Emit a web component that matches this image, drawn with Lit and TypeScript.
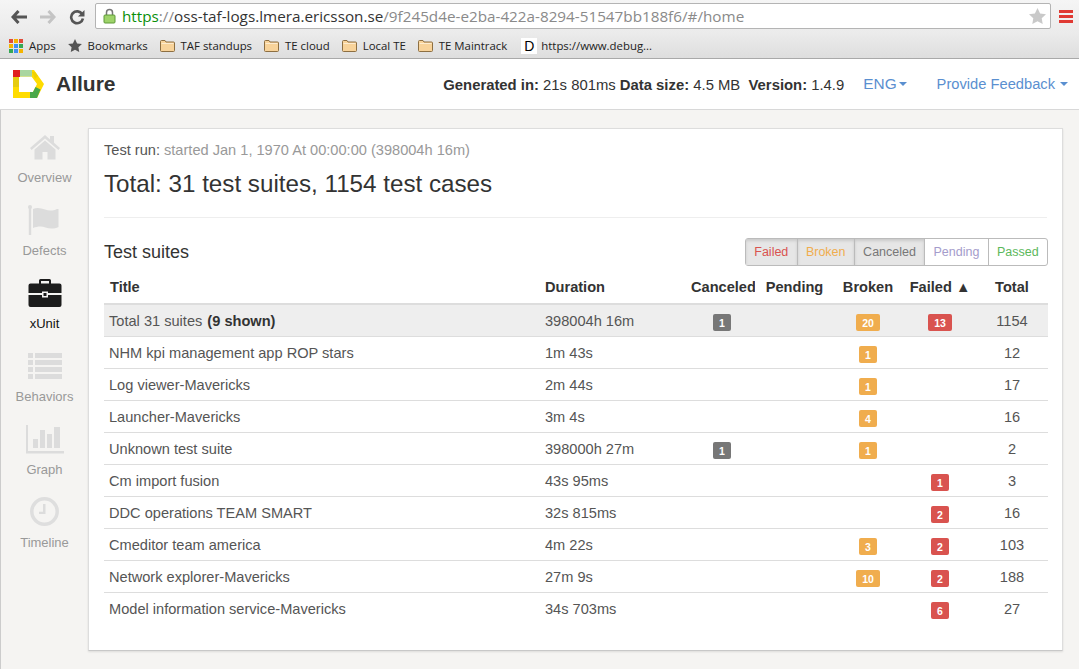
import { LitElement, html, css, svg } from 'lit';
import { customElement } from 'lit/decorators.js';

type Row = {
  title: string;
  bold?: string;
  duration: string;
  canceled?: number;
  broken?: number;
  failed?: number;
  total: number;
};

const ROWS: Row[] = [
  { title: 'Total 31 suites ', bold: '(9 shown)', duration: '398004h 16m', canceled: 1, broken: 20, failed: 13, total: 1154 },
  { title: 'NHM kpi management app ROP stars', duration: '1m 43s', broken: 1, total: 12 },
  { title: 'Log viewer-Mavericks', duration: '2m 44s', broken: 1, total: 17 },
  { title: 'Launcher-Mavericks', duration: '3m 4s', broken: 4, total: 16 },
  { title: 'Unknown test suite', duration: '398000h 27m', canceled: 1, broken: 1, total: 2 },
  { title: 'Cm import fusion', duration: '43s 95ms', failed: 1, total: 3 },
  { title: 'DDC operations TEAM SMART', duration: '32s 815ms', failed: 2, total: 16 },
  { title: 'Cmeditor team america', duration: '4m 22s', broken: 3, failed: 2, total: 103 },
  { title: 'Network explorer-Mavericks', duration: '27m 9s', broken: 10, failed: 2, total: 188 },
  { title: 'Model information service-Mavericks', duration: '34s 703ms', failed: 6, total: 27 },
];

const FOLDER = svg`<svg class="folder" width="15" height="14" viewBox="0 0 15 14">
  <path d="M.5 2.500q0-1 1-1h3.500l1 1.500h7.500q1 0 1 1v7.500q0 1-1 1h-12q-1 0-1-1z" fill="#f8d39a" stroke="#8d6f42"/>
  <path d="M1.500 4.500h12" stroke="#fdeccf"/>
</svg>`;

const NAV = [
  {
    label: 'Overview',
    icon: svg`<svg width="30" height="26" viewBox="0 0 30 26"><path d="M15 1 0 14l1.600 1.900L15 4.400l13.400 11.500L30 14l-6-5.200V2h-4v3.400z"/><path d="M15 6.500 4.500 15.500V25.500h8V18h5v7.500h8v-10z"/></svg>`,
  },
  {
    label: 'Defects',
    icon: svg`<svg width="34" height="32" viewBox="0 0 34 32"><circle cx="2" cy="3" r="2"/><rect x=".8" y="3" width="2.400" height="28"/><path d="M5 5c4-2 8-1 12 .5s8 1.500 12-.5h1.500v18c-4 2-9 2-13 .5s-8-1-12.500.5z"/></svg>`,
  },
  {
    label: 'xUnit',
    active: true,
    icon: svg`<svg width="34" height="30" viewBox="0 0 34 30"><path d="M11 6V2.500Q11 1 12.500 1h9Q23 1 23 2.500V6h-2V3h-8v3z"/><path d="M2.500 5.500h29Q33.500 5.500 33.500 7.500V15H20v-1.500h-6V15H.5V7.500Q.5 5.500 2.500 5.500z"/><path d="M.5 17H14v2.500h6V17h13.500v10q0 2-2 2h-29q-2 0-2-2z"/><rect x="15.500" y="15" width="3" height="3"/></svg>`,
  },
  {
    label: 'Behaviors',
    icon: svg`<svg width="34" height="27" viewBox="0 0 34 27"><rect width="5" height="5"/><rect x="7" width="27" height="5"/><rect y="7" width="5" height="5"/><rect x="7" y="7" width="27" height="5"/><rect y="14" width="5" height="5"/><rect x="7" y="14" width="27" height="5"/><rect y="21" width="5" height="5"/><rect x="7" y="21" width="27" height="5"/></svg>`,
  },
  {
    label: 'Graph',
    icon: svg`<svg width="38" height="29" viewBox="0 0 38 29"><path d="M0 0h2v26h36v2.500H0z"/><rect x="7" y="14" width="5" height="9"/><rect x="14" y="5" width="5" height="18"/><rect x="21" y="9" width="5" height="14"/><rect x="28" y="2" width="6" height="21"/></svg>`,
  },
  {
    label: 'Timeline',
    icon: svg`<svg width="30" height="30" viewBox="0 0 30 30"><circle cx="14.500" cy="14.500" r="12.700" fill="none" stroke="currentColor" stroke-width="3.500"/><path d="M13 7h2.500v10H9v-2.200h4z"/></svg>`,
  },
];

@customElement('app-root')
export class AppRoot extends LitElement {
  static styles = css`
    :host {
      display: block;
      height: 669px;
      overflow: hidden;
      background: #f5f4f2;
      font-family: 'Liberation Sans', Arial, sans-serif;
      font-size: 14.600px;
      color: #333;
    }
    .toolbar {
      height: 33px;
      display: flex;
      align-items: center;
      padding: 0 6px 0 11px;
      background: linear-gradient(#f5f5f5, #ebebeb);
      box-sizing: border-box;
    }
    .nav-btns {
      display: flex;
      align-items: center;
      gap: 13px;
      width: 84px;
    }
    .omnibox {
      flex: 1;
      height: 26px;
      margin-top: -1px;
      display: flex;
      align-items: center;
      gap: 6px;
      padding: 0 4px 0 7px;
      background: #fff;
      border: 1px solid #b4b4b4;
      border-radius: 2px;
      box-sizing: border-box;
      font-family: 'Open Sans', sans-serif;
      font-size: 15.250px;
      color: #8a8a8a;
      white-space: nowrap;
    }
    .omnibox .url {
      flex: 1;
    }
    .https {
      color: #0a8f0a;
    }
    .host {
      color: #333;
    }
    .menu-lines {
      width: 14px;
      height: 13px;
      margin-top: -1px;
      margin-left: 8px;
      background: repeating-linear-gradient(#e03a33 0 3px, #f0f0f0 3px 5px);
    }
    .bookmarks {
      height: 26px;
      display: flex;
      align-items: center;
      padding: 0 0 0 9px;
      background: linear-gradient(#ebebeb, #dedede);
      border-bottom: 1px solid #a9a9a9;
      box-sizing: border-box;
      font-family: 'Open Sans', sans-serif;
      font-size: 11.400px;
      color: #222;
      white-space: nowrap;
    }
    .mark {
      display: flex;
      align-items: center;
      gap: 6px;
      margin-right: 12px;
    }
    .apps {
      display: grid;
      grid-template-columns: repeat(3, 4px);
      gap: 1px;
    }
    .apps i {
      width: 4px;
      height: 4px;
    }
    .d-icon {
      width: 16px;
      height: 16px;
      margin-left: 2px;
      margin-right: -2px;
      background: #fff;
      color: #000;
      font: 14px 'Liberation Sans', sans-serif;
      text-align: center;
      line-height: 16px;
    }
    .header {
      height: 51px;
      display: flex;
      align-items: center;
      background: #fff;
      border-bottom: 1px solid #d8d8d8;
      box-sizing: border-box;
      padding: 0 11px 0 13px;
      white-space: nowrap;
    }
    .brand {
      flex: 1;
      display: flex;
      align-items: center;
      gap: 11px;
      font-size: 21px;
      font-weight: bold;
      color: #333;
    }
    .brand svg {
      margin-top: 1px;
    }
    .meta b {
      color: #333;
    }
    .meta {
      margin-top: 1px;
      font-size: 14.850px;
    }
    .link {
      color: #5a8fd0;
      display: flex;
      align-items: center;
      gap: 2px;
    }
    .eng {
      margin-left: 19px;
      font-size: 15.400px;
    }
    .feedback {
      margin-left: 30px;
      gap: 5px;
      font-size: 14.700px;
    }
    .caret {
      width: 0;
      height: 0;
      border: 4.500px solid transparent;
      border-top-color: #5a8fd0;
      border-bottom: 0;
    }
    .body {
      display: flex;
      height: 559px;
    }
    .side {
      width: 88px;
      flex: none;
      border-left: 1px solid #ccc;
      box-sizing: border-box;
      padding-top: 21px;
    }
    .side-item {
      height: 73px;
      display: flex;
      flex-direction: column;
      align-items: center;
      color: #999;
      font-size: 13px;
      box-sizing: border-box;
    }
    .side-item .ico {
      height: 32px;
      display: flex;
      align-items: center;
      justify-content: center;
      color: #dedede;
      fill: #dcdcdc;
      margin-bottom: 7px;
    }
    .side-item.active {
      color: #111;
    }
    .side-item.active .ico {
      fill: #1c1c1c;
    }
    .card {
      position: relative;
      width: 975px;
      height: 523px;
      margin-top: 18px;
      background: #fff;
      border: 1px solid #ddd;
      border-bottom-color: #c8c8c8;
      box-shadow: 0 1px 2px rgba(0, 0, 0, 0.1);
      box-sizing: border-box;
      padding: 12px 15px;
    }
    .run {
      color: #999;
      line-height: 18px;
    }
    .run span {
      color: #555;
    }
    h1 {
      margin: 10px 0 0;
      font-size: 24.200px;
      line-height: 30px;
      font-weight: normal;
      color: #333;
    }
    hr {
      border: 0;
      border-top: 1px solid #eee;
      margin: 18px 0 0;
    }
    .suites-head {
      display: flex;
      justify-content: space-between;
      align-items: center;
      margin-top: 20px;
      height: 28px;
    }
    h2 {
      margin: 0;
      font-size: 18px;
      font-weight: normal;
      color: #333;
    }
    .filters {
      display: flex;
      font-size: 12.500px;
      height: 28px;
      margin-right: -1px;
      border: 1px solid #bbb;
      border-radius: 3px;
      box-sizing: border-box;
    }
    .filters span {
      padding: 0 8.300px;
      line-height: 26px;
      border-left: 1px solid #bbb;
    }
    .filters span:first-child {
      border-left: 0;
    }
    .filters .on {
      background: #e6e6e6;
      box-shadow: inset 0 2px 3px rgba(0, 0, 0, 0.12);
    }
    table {
      width: 944px;
      border-collapse: collapse;
      table-layout: fixed;
      margin-top: 6px;
    }
    th {
      height: 29px;
      padding: 0 0 2px;
      font-weight: bold;
      color: #333;
      text-align: center;
      border-bottom: 2px solid #ddd;
      white-space: nowrap;
      overflow: hidden;
    }
    th.l {
      text-align: left;
      padding-left: 6px;
    }
    th.cut span {
      display: block;
      width: 64px;
      margin-left: 4px;
      overflow: hidden;
      text-align: left;
    }
    td {
      height: 31px;
      padding: 0;
      text-align: center;
      color: #555;
      border-bottom: 1px solid #ddd;
    }
    tr:last-child td {
      border-bottom: 0;
    }
    td.l {
      text-align: left;
      padding-left: 5px;
    }
    td.l + td.l {
      padding-left: 6px;
    }
    tr.total td {
      background: #eee;
    }
    td b {
      color: #333;
      margin-left: 1px;
    }
    .badge {
      display: inline-block;
      vertical-align: -3px;
      min-width: 6px;
      padding: 0 6px;
      height: 17px;
      line-height: 18px;
      border-radius: 2px;
      color: #fff;
      font-size: 10.500px;
      font-weight: bold;
    }
    .canceled {
      background: #777;
    }
    .broken {
      background: #f0ad4e;
    }
    .failed {
      background: #d9534f;
    }
  `;

  badge(kind: string, value?: number) {
    return value === undefined ? '' : html`<span class="badge ${kind}">${value}</span>`;
  }

  render() {
    const colors = ['#e04b3a', '#f4b400', '#e04b3a', '#f4b400', '#3f8ff0', '#34a853', '#34a853', '#3f8ff0', '#f4b400'];
    return html`
      <div class="toolbar">
        <div class="nav-btns">
          <svg width="16" height="14" viewBox="0 0 16 14"><path d="M7.500 1 2 7l5.500 6M2.500 7H16" fill="none" stroke="#555" stroke-width="3"/></svg>
          <svg width="16" height="14" viewBox="0 0 16 14"><path d="M8.500 1 14 7l-5.500 6M13.500 7H0" fill="none" stroke="#c4c4c4" stroke-width="3"/></svg>
          <svg width="16" height="16" viewBox="0 0 17 17"><path d="M14 5.500A6.300 6.300 0 1 0 14.800 10" fill="none" stroke="#555" stroke-width="2.800"/><path d="M16.500 1v7H9.500z" fill="#555"/></svg>
        </div>
        <div class="omnibox">
          <svg width="13" height="16" viewBox="0 0 13 16"><path d="M3.500 7V4.500a3 3 0 0 1 6 0V7" fill="none" stroke="#777" stroke-width="1.500"/><rect x="1" y="7" width="11" height="8" rx="1" fill="#9ed36a" stroke="#5f9a38"/></svg>
          <span class="url"><span class="https">https</span>://<span class="host">oss-taf-logs.lmera.ericsson.se</span>/9f245d4e-e2ba-422a-8294-51547bb188f6/#/home</span>
          <svg width="17" height="16" viewBox="0 0 17 16"><path d="M8.500 0l2.600 5.400 5.900.8-4.300 4.100 1 5.700-5.200-2.800L3.300 16l1-5.700L0 6.200l5.900-.8z" fill="#c9c9c9"/></svg>
        </div>
        <div class="menu-lines"></div>
      </div>
      <div class="bookmarks">
        <div class="mark">
          <span class="apps">${colors.map((c) => html`<i style="background:${c}"></i>`)}</span>Apps
        </div>
        <div class="mark">
          <svg width="14" height="13" viewBox="0 0 17 16"><path d="M8.500 0l2.600 5.400 5.900.8-4.300 4.100 1 5.700-5.200-2.800L3.300 16l1-5.700L0 6.200l5.900-.8z" fill="#555"/></svg>Bookmarks
        </div>
        ${['TAF standups', 'TE cloud', 'Local TE', 'TE Maintrack'].map(
          (name) => html`<div class="mark">${FOLDER}${name}</div>`
        )}
        <div class="mark"><span class="d-icon">D</span>https://www.debug...</div>
      </div>
      <div class="header">
        <div class="brand">
          <svg width="32" height="29" viewBox="0 0 32 29">
            <path fill-rule="evenodd" fill="#ffdc00" d="M0 0h21l10 14-7 14H0zM6 6.500V22h14l4-8-5.500-7.500z"/>
            <path fill="#e6cc10" d="M0 7h6v10H0z"/>
            <path fill="#f0d200" d="M19 2h3l3 4-3 3z"/>
            <path fill="#a9d6a0" d="M7 0h12v6.500H7z"/>
            <path fill="#e01f1f" d="M0 0h7v7H0z"/>
            <path fill="#4aa84a" d="M17 22h3l2.500-5 5 2.500-3.500 8.500h-7z"/>
          </svg>
          Allure
        </div>
        <div class="meta"><b>Generated in:</b> 21s 801ms <b>Data size:</b> 4.5 MB &nbsp;<b>Version:</b> 1.4.9</div>
        <div class="link eng">ENG<i class="caret"></i></div>
        <div class="link feedback">Provide Feedback<i class="caret"></i></div>
      </div>
      <div class="body">
        <nav class="side">
          ${NAV.map(
            (n) => html`<div class="side-item ${n.active ? 'active' : ''}"><div class="ico">${n.icon}</div>${n.label}</div>`
          )}
        </nav>
        <main class="card">
          <div class="run"><span>Test run:</span> started Jan 1, 1970 At 00:00:00 (398004h 16m)</div>
          <h1>Total: 31 test suites, 1154 test cases</h1>
          <hr />
          <div class="suites-head">
            <h2>Test suites</h2>
            <div class="filters">
              <span class="on" style="color:#d9534f">Failed</span>
              <span class="on" style="color:#f0ad4e">Broken</span>
              <span class="on" style="color:#777">Canceled</span>
              <span style="color:#a49ccb">Pending</span>
              <span style="color:#5cb85c">Passed</span>
            </div>
          </div>
          <table>
            <colgroup>
              <col style="width:435px" /><col style="width:148px" /><col style="width:70px" /><col style="width:75px" /><col style="width:72px" /><col style="width:72px" /><col style="width:72px" />
            </colgroup>
            <thead>
              <tr>
                <th class="l">Title</th><th class="l">Duration</th><th class="cut"><span>Canceled</span></th><th>Pending</th><th>Broken</th><th>Failed ▲</th><th>Total</th>
              </tr>
            </thead>
            <tbody>
              ${ROWS.map(
                (r, i) => html`<tr class=${i === 0 ? 'total' : ''}>
                  <td class="l">${r.title}${r.bold ? html`<b>${r.bold}</b>` : ''}</td>
                  <td class="l">${r.duration}</td>
                  <td>${this.badge('canceled', r.canceled)}</td>
                  <td></td>
                  <td>${this.badge('broken', r.broken)}</td>
                  <td>${this.badge('failed', r.failed)}</td>
                  <td>${r.total}</td>
                </tr>`
              )}
            </tbody>
          </table>
        </main>
      </div>
    `;
  }
}
